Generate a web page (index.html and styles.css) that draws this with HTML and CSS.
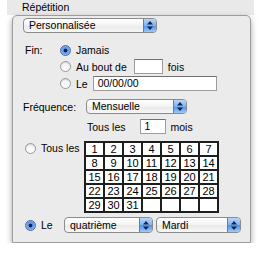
FILE: index.html
```html
<!DOCTYPE html>
<html lang="fr">
  <head>
    <meta charset="UTF-8" />
    <title>Répétition</title>
    <link rel="stylesheet" href="styles.css">
  </head>
  <body>
    <div class="panel">
      <div class="title">Répétition</div>

      <div class="box">
        <div class="row mode-row">
          <div class="popup mode-popup">
            <span class="popup-text">Personnalisée</span>
            <span class="popup-cap"><svg width="6" height="9" viewBox="0 0 6 9"><path d="M3 0L6 3.5H0Z M3 9L6 5.5H0Z" fill="#0d2650"/></svg></span>
          </div>
        </div>

        <!-- Fin -->
        <div class="fin">
          <span class="fin-label">Fin:</span>
          <div class="fin-options">
            <div class="opt opt-first"><span class="radio on"></span>Jamais</div>
            <div class="opt opt-field"><span class="radio"></span>Au bout de<span class="field count-field"></span>fois</div>
            <div class="opt opt-field"><span class="radio"></span>Le<span class="field date-field">00/00/00</span></div>
          </div>
        </div>

        <!-- Fréquence -->
        <div class="row freq-row">
          <span class="freq-label">Fréquence:</span>
          <div class="popup freq-popup">
            <span class="popup-text">Mensuelle</span>
            <span class="popup-cap"><svg width="6" height="9" viewBox="0 0 6 9"><path d="M3 0L6 3.5H0Z M3 9L6 5.5H0Z" fill="#0d2650"/></svg></span>
          </div>
        </div>

        <div class="row every-row">
          Tous les<span class="field months-field">1</span>mois
        </div>

        <!-- jours du mois -->
        <div class="days-row">
          <div class="opt days-opt"><span class="radio"></span>Tous les</div>
          <div class="days" id="days"></div>
        </div>

        <div class="row le-row">
          <span class="radio on"></span><span class="le-text">Le</span>
          <div class="popup week-popup">
            <span class="popup-text">quatrième</span>
            <span class="popup-cap"><svg width="6" height="9" viewBox="0 0 6 9"><path d="M3 0L6 3.5H0Z M3 9L6 5.5H0Z" fill="#0d2650"/></svg></span>
          </div>
          <div class="popup day-popup">
            <span class="popup-text">Mardi</span>
            <span class="popup-cap"><svg width="6" height="9" viewBox="0 0 6 9"><path d="M3 0L6 3.5H0Z M3 9L6 5.5H0Z" fill="#0d2650"/></svg></span>
          </div>
        </div>
      </div>
    </div>

    <script>
      // Fill the month grid: 31 days + 4 empty cells
      const days = document.getElementById("days");
      for (let i = 1; i <= 35; i++) {
        const cell = document.createElement("span");
        cell.className = "day";
        cell.textContent = i <= 31 ? i : "";
        days.appendChild(cell);
      }
    </script>
  </body>
</html>
```

FILE: styles.css
```css
body {
  margin: 0;
  background: #fff;
  font: 10.5px "Liberation Sans", Arial, sans-serif;
  color: #000;
}

.panel {
  width: 247px;
  margin-left: 7px;
}

.title {
  height: 15px;
  line-height: 14px;
  padding-left: 15px;
  background: #e9e9e9;
}

.box {
  width: 239px;
  height: 228px;
  margin-left: 5px;
  border: 1px solid #9c9c9c;
  border-radius: 5px 5px 0 0;
  background: #ebebeb;
  box-shadow: 0 3px 6px rgba(0, 0, 0, 0.35);
  box-sizing: border-box;
  padding-top: 2px;
}

.row {
  display: flex;
  align-items: center;
}

/* Aqua popup button */
.popup {
  display: flex;
  align-items: center;
  height: 15px;
  box-sizing: border-box;
  border: 1px solid #8b8b8b;
  border-radius: 4px;
  background: linear-gradient(#ffffff, #f3f3f3 50%, #e9e9e9 51%, #f7f7f7);
  overflow: hidden;
}

.popup-text {
  flex: 1;
  padding-left: 5px;
  line-height: 13px;
}

.popup-cap {
  display: flex;
  align-items: center;
  justify-content: center;
  width: 12px;
  height: 100%;
  border-left: 1px solid #5a7fb8;
  background: linear-gradient(#b7d6fa, #7fb2f0 50%, #4f8fe3 51%, #9ccaf8);
}

.mode-row {
  padding-left: 10px;
}

.mode-popup {
  width: 134px;
}

/* Fin */
.fin {
  display: flex;
  padding-left: 12px;
  margin-top: 10px;
}

.fin-label {
  width: 35px;
  line-height: 14px;
}

.opt {
  display: flex;
  align-items: center;
}

.opt-first {
  height: 14px;
}

.opt-field {
  height: 15px;
  margin-top: 2px;
}

.radio {
  width: 11px;
  height: 11px;
  box-sizing: border-box;
  margin-right: 5px;
  border: 1px solid #989898;
  border-radius: 50%;
  background: linear-gradient(#f2f2f2, #ffffff);
  box-shadow: inset 0 1px 1px rgba(0, 0, 0, 0.12);
}

.radio.on {
  border-color: #4a6aa0;
  background: radial-gradient(circle, #12234a 0 1.6px, #5d95e6 2.2px, #8fc0f6 5px);
}

.field {
  height: 15px;
  box-sizing: border-box;
  border: 1px solid #9d9d9d;
  border-top-color: #707070;
  background: #fff;
  line-height: 13px;
  padding-left: 4px;
}

.count-field {
  width: 29px;
  margin: 0 5px 0 7px;
}

.date-field {
  width: 124px;
  margin-left: 5px;
}

/* Fréquence */
.freq-row {
  padding-left: 10px;
  margin-top: 8px;
}

.freq-label {
  width: 63px;
}

.freq-popup {
  width: 101px;
}

.every-row {
  padding-left: 74px;
  margin-top: 5px;
  height: 15px;
}

.months-field {
  width: 26px;
  margin: 0 5px 0 14px;
}

/* month grid */
.days-row {
  display: flex;
  align-items: flex-start;
  padding-left: 12px;
  margin-top: 7px;
}

.days-opt {
  width: 59px;
  height: 14px;
}

.days {
  display: grid;
  grid-template-columns: repeat(7, 17px);
  grid-auto-rows: 12px;
  gap: 2px;
  padding: 2px;
  background: #1e1e1e;
}

.day {
  background: #fff;
  text-align: center;
  line-height: 12px;
  font-size: 11px;
}

.le-row {
  padding-left: 12px;
  margin-top: 4px;
  height: 16px;
}

.le-text {
  width: 23px;
}

.week-popup {
  width: 89px;
  height: 16px;
}

.day-popup {
  width: 85px;
  height: 16px;
  margin-left: 3px;
}
```
